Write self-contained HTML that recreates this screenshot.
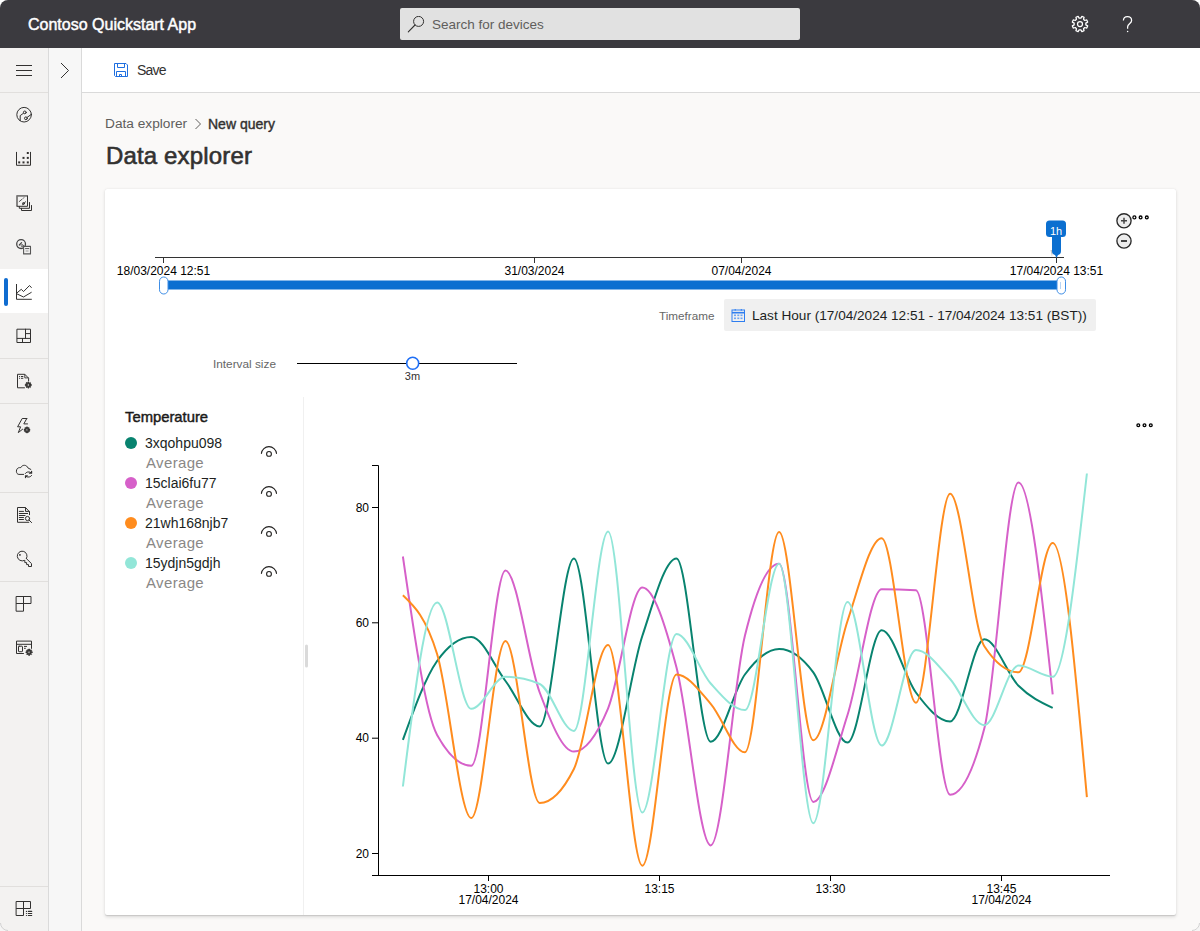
<!DOCTYPE html>
<html><head><meta charset="utf-8">
<style>
*{box-sizing:border-box;margin:0;padding:0}
html,body{width:1200px;height:931px;overflow:hidden;background:#fff;font-family:"Liberation Sans",sans-serif}
.abs{position:absolute}
#app{position:absolute;left:0;top:0;width:1200px;height:931px;border-radius:8px;overflow:hidden;background:#faf9f8}
#top{left:0;top:0;width:1200px;height:48px;background:#3b3a3f}
#title{left:28px;top:16px;color:#fff;font-weight:400;font-size:16px;letter-spacing:0px;-webkit-text-stroke:0.45px #fff;white-space:nowrap}
#search{left:400px;top:8px;width:400px;height:32px;background:#e1e1e1;border-radius:2px}
#search span{position:absolute;left:32px;top:9px;font-size:13.5px;color:#605e5c;white-space:nowrap}
#nav{left:0;top:48px;width:49px;height:883px;background:#f3f2f1;border-right:1px solid #dadada}
#nav2{left:49px;top:48px;width:33px;height:883px;background:#f7f7f7;border-right:1px solid #dadada}
#cmd{left:82px;top:48px;width:1118px;height:45px;background:#fff;border-bottom:1px solid #dadada}
.sep{position:absolute;left:0;width:48px;height:1px;background:#e1dfdd}
.txt{position:absolute;white-space:nowrap}
#card{left:105px;top:189px;width:1071px;height:726px;background:#fff;border-radius:2px;box-shadow:0 1.6px 3.6px rgba(0,0,0,.13),0 0.3px 0.9px rgba(0,0,0,.11)}
.ax{font-family:"Liberation Sans",sans-serif;font-size:12px;fill:#000}
</style></head><body>
<div id="app">
 <div id="top" class="abs">
  <div id="title" class="abs">Contoso Quickstart App</div>
  <div id="search" class="abs">
   <svg class="abs" style="left:5px;top:8px" width="20" height="20" viewBox="0 0 20 20"><circle cx="13.6" cy="5.4" r="5" fill="none" stroke="#323130" stroke-width="1"/><line x1="10" y1="9" x2="3.3" y2="15.8" stroke="#323130" stroke-width="1.1" stroke-linecap="round"/></svg>
   <span>Search for devices</span>
  </div>
  <svg class="abs" style="left:1070px;top:14px" width="20" height="20" viewBox="0 0 20 20"><g fill="none" stroke="#fff" stroke-width="1.25" stroke-linejoin="round"><polygon points="15.83,10.88 17.67,11.90 16.77,14.07 14.75,13.51 13.51,14.75 14.07,16.77 11.90,17.67 10.88,15.83 9.12,15.83 8.10,17.67 5.93,16.77 6.49,14.75 5.25,13.51 3.23,14.07 2.33,11.90 4.17,10.88 4.17,9.12 2.33,8.10 3.23,5.93 5.25,6.49 6.49,5.25 5.93,3.23 8.10,2.33 9.12,4.17 10.88,4.17 11.90,2.33 14.07,3.23 13.51,5.25 14.75,6.49 16.77,5.93 17.67,8.10 15.83,9.12"/><circle cx="10" cy="10" r="2.5"/></g></svg>
  <svg class="abs" style="left:1117px;top:12px" width="20" height="24" viewBox="1117 12 20 24"><path d="M1123.4,20.6C1123.4,18.1 1125.2,16.5 1127.5,16.5C1129.8,16.5 1131.6,18.1 1131.6,20.4C1131.6,23.4 1127.6,24.2 1127.6,26.9V28.8" fill="none" stroke="#fff" stroke-width="1.25"/><circle cx="1127.6" cy="31.4" r="0.75" fill="#fff"/></svg>
 </div>

 <div id="nav" class="abs">
  <!-- hamburger -->
  <svg class="abs" style="left:16px;top:16px" width="16" height="12" viewBox="0 0 16 12"><g stroke="#323130" stroke-width="1"><line x1="0" y1="1.5" x2="16" y2="1.5"/><line x1="0" y1="6.5" x2="16" y2="6.5"/><line x1="0" y1="11.5" x2="16" y2="11.5"/></g></svg>
  <div class="sep" style="top:44px"></div>
  <div class="abs" style="left:0;top:221px;width:48px;height:44px;background:#fff"></div><div class="abs" style="left:4px;top:230px;width:4px;height:28px;border-radius:2px;background:#0f6cd0"></div><svg class="abs" style="left:16px;top:236px" width="16" height="16" viewBox="0 0 16 16"><g fill="none" stroke="#323130" stroke-width="1" stroke-linejoin="round"><path d="M0.5,0V15.3H15.8"/><path d="M0.8,9L5.3,5.3L7.5,7.6L13.5,1.5L15.6,3.8"/><path d="M0.8,9.8L7.5,13L15.6,8.2"/></g></svg><div class="sep" style="top:310px"></div><div class="sep" style="top:355px"></div><div class="sep" style="top:444px"></div><div class="sep" style="top:533px"></div><div class="sep" style="top:838px"></div><svg class="abs" style="left:14px;top:56px" width="20" height="20" viewBox="0 0 20 20"><g fill="none" stroke="#323130" stroke-width="1" stroke-linecap="round" stroke-linejoin="round"><circle cx="10.1" cy="10.7" r="7.3"/><path d="M6.2,16.6V11.6L9.4,9.3"/><circle cx="10.8" cy="8.4" r="1.4"/><circle cx="11.9" cy="14.3" r="1.4"/><path d="M13.1,13.4L17.3,10.4"/></g></svg>
<svg class="abs" style="left:14px;top:100px" width="20" height="20" viewBox="0 0 20 20"><g fill="none" stroke="#323130" stroke-width="1" stroke-linecap="round" stroke-linejoin="round"><path d="M2.5,4.3V17.3H16.5V4.3"/><rect x="4.2" y="13.4" width="2" height="2" fill="#323130" stroke="none"/><rect x="8.5" y="13.4" width="2" height="2" fill="#323130" stroke="none"/><rect x="12.8" y="13.4" width="2" height="2" fill="#323130" stroke="none"/><rect x="8.5" y="8.9" width="2" height="2" fill="#323130" stroke="none"/><rect x="12.8" y="8.9" width="2" height="2" fill="#323130" stroke="none"/><rect x="12.8" y="4.0" width="2" height="2" fill="#323130" stroke="none"/></g></svg>
<svg class="abs" style="left:14px;top:145px" width="20" height="20" viewBox="0 0 20 20"><g fill="none" stroke="#323130" stroke-width="1" stroke-linecap="round" stroke-linejoin="round"><path d="M3,13.2V2.9H13.3" stroke="#7a7978" stroke-width="1.8" stroke-linecap="butt"/><path d="M13.5,2.8V13.3H3" /><path d="M5.2,8.6L7.8,6.4" stroke="#555"/><path d="M8.8,5.6L10.2,4.5" stroke="#777"/><path d="M8.6,11.6L11.6,8.8"/><circle cx="9.5" cy="10.5" r="1" /><path d="M5.3,13.5V15.3H15.5V9.5"/><path d="M7.5,15.3V17.5H17.5V12.5"/></g></svg>
<svg class="abs" style="left:14px;top:189px" width="20" height="20" viewBox="0 0 20 20"><g fill="none" stroke="#323130" stroke-width="1" stroke-linecap="round" stroke-linejoin="round"><circle cx="7.1" cy="7.1" r="4.4" stroke="#444" stroke-width="1.3"/><path d="M5.3,8L7.6,5.6" stroke="#444" stroke-width="1.2"/><circle cx="8.2" cy="8.6" r="1.1" stroke="#666"/><rect x="9.6" y="9.4" width="6.9" height="7.5" fill="#f3f2f1" stroke="#555" stroke-width="1.1"/><path d="M11.5,11.6H14.8" stroke="#555"/><path d="M12,14H14.2" stroke="#999"/></g></svg>
<svg class="abs" style="left:14px;top:278px" width="20" height="20" viewBox="0 0 20 20"><g fill="none" stroke="#323130" stroke-width="1" stroke-linecap="round" stroke-linejoin="round"><rect x="3.3" y="3.2" width="13.2" height="13.3"/><path d="M11.5,3.2V12.4M3.3,12.4H16.5M11.5,7.6H16.5M8.5,12.4V16.5"/></g></svg>
<svg class="abs" style="left:14px;top:323px" width="20" height="20" viewBox="0 0 20 20"><g fill="none" stroke="#323130" stroke-width="1" stroke-linecap="round" stroke-linejoin="round"><path d="M10.5,16.8H3.5V3.3H10.8L14.6,7.2V9.7"/><path d="M10.8,3.6V6.9H14.3" stroke-width="0.9"/><path d="M5.5,5.5H5.6M5.5,7.3H5.6M7.3,5.5H8.9M7.3,7.3H8.9"/><polygon points="16.36,13.55 17.38,13.64 17.38,14.36 16.36,14.45 16.08,15.14 16.73,15.92 16.22,16.43 15.44,15.78 14.75,16.06 14.66,17.08 13.94,17.08 13.85,16.06 13.16,15.78 12.38,16.43 11.87,15.92 12.52,15.14 12.24,14.45 11.22,14.36 11.22,13.64 12.24,13.55 12.52,12.86 11.87,12.08 12.38,11.57 13.16,12.22 13.85,11.94 13.94,10.92 14.66,10.92 14.75,11.94 15.44,12.22 16.22,11.57 16.73,12.08 16.08,12.86" fill="#323130"/><circle cx="14.3" cy="14.0" r="1.2400000000000002" fill="#f3f2f1"/></g></svg>
<svg class="abs" style="left:14px;top:368px" width="20" height="20" viewBox="0 0 20 20"><g fill="none" stroke="#323130" stroke-width="1" stroke-linecap="round" stroke-linejoin="round"><path d="M12.8,2.5H8.2L3.6,10.8H6.6L4.3,16.6L8.6,13.2"/><path d="M12.8,2.5L9.8,7.9H13.5"/><polygon points="14.99,13.46 15.98,13.55 15.98,14.25 14.99,14.34 14.72,15.00 15.36,15.76 14.86,16.26 14.10,15.62 13.44,15.89 13.35,16.88 12.65,16.88 12.56,15.89 11.90,15.62 11.14,16.26 10.64,15.76 11.28,15.00 11.01,14.34 10.02,14.25 10.02,13.55 11.01,13.46 11.28,12.80 10.64,12.04 11.14,11.54 11.90,12.18 12.56,11.91 12.65,10.92 13.35,10.92 13.44,11.91 14.10,12.18 14.86,11.54 15.36,12.04 14.72,12.80" fill="#323130"/><circle cx="13.0" cy="13.9" r="1.2000000000000002" fill="#f3f2f1"/></g></svg>
<svg class="abs" style="left:14px;top:413px" width="20" height="20" viewBox="0 0 20 20"><g fill="none" stroke="#323130" stroke-width="1" stroke-linecap="round" stroke-linejoin="round"><path d="M9.6,13.4H4.9C3.3,13.4 2.4,11.9 2.4,10.2C2.4,8.3 3.6,6.6 5.6,6.6H6.8C7.5,5.1 8.8,4.3 10.4,4.3C12.1,4.3 13.4,5.5 14.1,7.1L16.8,8.4"/><path d="M11.3,12.5C12.2,10.9 14.8,10.2 17.1,11.6"/><path d="M15.5,12.2H17.6V10.4" stroke-width="1.2"/><path d="M17.6,14.5C16.7,16.1 14.1,16.8 11.8,15.4"/><path d="M13.4,14.8H11.5V16.6" stroke-width="1.2"/></g></svg>
<svg class="abs" style="left:14px;top:457px" width="20" height="20" viewBox="0 0 20 20"><g fill="none" stroke="#323130" stroke-width="1" stroke-linecap="round" stroke-linejoin="round"><path d="M14.8,17.3H3.5V2.5H11.5L15.5,6.8V9.7"/><path d="M11.5,2.8V6.4H15.3"/><path d="M5.3,6.4H9.5M5.3,8.5H13.6M5.3,10.5H11M5.3,12.5H9.5M5.3,14.5H9.5"/><circle cx="13.5" cy="13.5" r="2.1"/><path d="M15.1,15.1L17.6,17.6"/></g></svg>
<svg class="abs" style="left:14px;top:502px" width="20" height="20" viewBox="0 0 20 20"><g fill="none" stroke="#323130" stroke-width="1" stroke-linecap="round" stroke-linejoin="round"><path d="M12.4,8.6A4.9,4.9 0 1 0 10.3,10.5"/><rect x="5.1" y="4.1" width="1.6" height="1.6" fill="#323130" stroke="none"/><path d="M12.4,8.6L17.5,13.6V16.5H14.5V14.6H12.6V12.6H10.8V10.5"/></g></svg>
<svg class="abs" style="left:14px;top:546px" width="20" height="20" viewBox="0 0 20 20"><g fill="none" stroke="#323130" stroke-width="1" stroke-linecap="round" stroke-linejoin="round"><path d="M2.5,2.5H17V9.5H9.5V17.2H2.5Z"/><path d="M9.5,2.5V9.5M2.5,9.5H9.5"/></g></svg>
<svg class="abs" style="left:14px;top:589px" width="20" height="20" viewBox="0 0 20 20"><g fill="none" stroke="#323130" stroke-width="1" stroke-linecap="round" stroke-linejoin="round"><path d="M9.5,16.5H2.5V4.1H17.5V11.4"/><path d="M2.5,7.3H17.5"/><rect x="4.5" y="9.2" width="4" height="5.5" rx="0.6"/><path d="M10.4,9.4H12.6M10.4,11.3H11.4"/><polygon points="17.23,14.73 18.28,14.82 18.28,15.58 17.23,15.67 16.93,16.37 17.61,17.18 17.08,17.71 16.27,17.03 15.57,17.33 15.48,18.38 14.72,18.38 14.63,17.33 13.93,17.03 13.12,17.71 12.59,17.18 13.27,16.37 12.97,15.67 11.92,15.58 11.92,14.82 12.97,14.73 13.27,14.03 12.59,13.22 13.12,12.69 13.93,13.37 14.63,13.07 14.72,12.02 15.48,12.02 15.57,13.07 16.27,13.37 17.08,12.69 17.61,13.22 16.93,14.03" fill="#323130"/><circle cx="15.1" cy="15.2" r="1.2800000000000002" fill="#f3f2f1"/></g></svg>
<svg class="abs" style="left:14px;top:851px" width="20" height="20" viewBox="0 0 20 20"><g fill="none" stroke="#323130" stroke-width="1" stroke-linecap="round" stroke-linejoin="round"><path d="M2.5,2.5H16.5V9.5H9.5V16.5H2.5Z"/><path d="M9.5,2.5V9.5M2.5,9.5H9.5"/><path d="M12.4,12.4H12.5M12.4,14.5H12.5M12.4,16.5H12.5M14.3,12.4H17.7M14.3,14.5H17.7M14.3,16.5H17.7" stroke-width="1.1"/></g></svg>
 </div>
 <div id="nav2" class="abs">
  <svg class="abs" style="left:11px;top:14px" width="10" height="17" viewBox="0 0 10 17"><polyline points="1,1 8.5,8.5 1,16" fill="none" stroke="#323130" stroke-width="1"/></svg>
 </div>
 <div id="cmd" class="abs">
  <svg class="abs" style="left:32px;top:15px" width="14" height="14" viewBox="0 0 14 14"><g fill="none" stroke="#1f6fe0" stroke-width="1"><path d="M0.5,0.5H12L13.5,2V13.5H1.5L0.5,12.5Z"/><path d="M3.5,0.5V4.5H10.5V0.5"/><path d="M2.5,13.5V8.5H11.5V13.5"/><path d="M5.5,13.5V11.5H7.5V13.5"/></g></svg>
  <div class="txt" style="left:55px;top:14px;font-size:14px;color:#323130;letter-spacing:-0.8px">Save</div>
 </div>

 <div class="txt" style="left:105px;top:116px;font-size:13.7px;color:#605e5c">Data explorer</div>
 <svg class="abs" style="left:194px;top:118px" width="9" height="12" viewBox="0 0 9 12"><polyline points="1.5,1 6.5,6 1.5,11" fill="none" stroke="#605e5c" stroke-width="1"/></svg>
 <div class="txt" style="left:208px;top:116px;font-size:14px;font-weight:400;color:#323130;-webkit-text-stroke:0.4px #323130">New query</div>
 <div class="txt" style="left:106px;top:142px;font-size:24px;font-weight:400;color:#323130;-webkit-text-stroke:0.6px #323130;letter-spacing:0.15px">Data explorer</div>

 <div id="card" class="abs"></div>


 <!-- timeframe -->
 <div class="txt" style="left:659px;top:309px;font-size:11.7px;color:#666">Timeframe</div>
 <div class="abs" style="left:724px;top:299px;width:372px;height:32px;background:#f0f0f0;border-radius:2px"></div>
 <svg class="abs" style="left:731px;top:309px" width="15" height="13" viewBox="0 0.5 15 13"><g fill="none" stroke="#2f7ef0" stroke-width="1"><rect x="1" y="1.5" width="12.5" height="11.5"/><path d="M1,4.2H13.5" stroke-width="1.6"/><path d="M4.2,0.5V2.2M10.3,0.5V2.2" /></g><g fill="#6ea5f5"><rect x="3" y="6" width="2" height="1.6"/><rect x="6.3" y="6" width="2" height="1.6"/><rect x="9.5" y="6" width="2" height="1.6"/><rect x="3" y="9" width="2" height="1.6"/><rect x="6.3" y="9" width="2" height="1.6"/><rect x="9.5" y="9" width="2" height="1.6"/></g></svg>
 <div class="txt" style="left:752px;top:308px;font-size:13.6px;color:#201f1e">Last Hour (17/04/2024 12:51 - 17/04/2024 13:51 (BST))</div>
 <!-- interval -->
 <div class="txt" style="left:213px;top:357px;font-size:11.8px;color:#666">Interval size</div>
 <!-- legend -->
 <div class="txt" style="left:125px;top:409px;font-size:14.8px;font-weight:400;color:#1b1a19;-webkit-text-stroke:0.45px #1b1a19">Temperature</div>
 <div class="abs" style="left:125px;top:437px;width:12px;height:12px;border-radius:6px;background:#08836f"></div>
<div class="txt" style="left:145px;top:435px;font-size:14px;color:#201f1e">3xqohpu098</div>
<div class="txt" style="left:146px;top:454px;font-size:15px;letter-spacing:0.35px;color:#8a8886">Average</div>
<svg class="abs" style="left:259px;top:444px" width="20" height="14" viewBox="0 0 20 14"><g fill="none" stroke="#201f1e" stroke-width="1.1" stroke-linecap="round"><path d="M2.4,9.4A7.6,7.6 0 0 1 17.5,9.4"/><circle cx="10" cy="9.9" r="2.4"/></g></svg>
<div class="abs" style="left:125px;top:477px;width:12px;height:12px;border-radius:6px;background:#d660c9"></div>
<div class="txt" style="left:145px;top:475px;font-size:14px;color:#201f1e">15clai6fu77</div>
<div class="txt" style="left:146px;top:494px;font-size:15px;letter-spacing:0.35px;color:#8a8886">Average</div>
<svg class="abs" style="left:259px;top:484px" width="20" height="14" viewBox="0 0 20 14"><g fill="none" stroke="#201f1e" stroke-width="1.1" stroke-linecap="round"><path d="M2.4,9.4A7.6,7.6 0 0 1 17.5,9.4"/><circle cx="10" cy="9.9" r="2.4"/></g></svg>
<div class="abs" style="left:125px;top:517px;width:12px;height:12px;border-radius:6px;background:#ff8c1e"></div>
<div class="txt" style="left:145px;top:515px;font-size:14px;color:#201f1e">21wh168njb7</div>
<div class="txt" style="left:146px;top:534px;font-size:15px;letter-spacing:0.35px;color:#8a8886">Average</div>
<svg class="abs" style="left:259px;top:524px" width="20" height="14" viewBox="0 0 20 14"><g fill="none" stroke="#201f1e" stroke-width="1.1" stroke-linecap="round"><path d="M2.4,9.4A7.6,7.6 0 0 1 17.5,9.4"/><circle cx="10" cy="9.9" r="2.4"/></g></svg>
<div class="abs" style="left:125px;top:557px;width:12px;height:12px;border-radius:6px;background:#92e6d8"></div>
<div class="txt" style="left:145px;top:555px;font-size:14px;color:#201f1e">15ydjn5gdjh</div>
<div class="txt" style="left:146px;top:574px;font-size:15px;letter-spacing:0.35px;color:#8a8886">Average</div>
<svg class="abs" style="left:259px;top:564px" width="20" height="14" viewBox="0 0 20 14"><g fill="none" stroke="#201f1e" stroke-width="1.1" stroke-linecap="round"><path d="M2.4,9.4A7.6,7.6 0 0 1 17.5,9.4"/><circle cx="10" cy="9.9" r="2.4"/></g></svg>
 <svg class="abs" style="left:0;top:0" width="1200" height="931" viewBox="0 0 1200 931">
  <!-- timeline -->
  <line x1="155" y1="257.5" x2="1064" y2="257.5" stroke="#333" stroke-width="1"/>
  <line x1="163.5" y1="257.5" x2="163.5" y2="263" stroke="#333"/>
<text class="ax" x="163.5" y="275" text-anchor="middle">18/03/2024 12:51</text>
<line x1="534.5" y1="257.5" x2="534.5" y2="263" stroke="#333"/>
<text class="ax" x="534.5" y="275" text-anchor="middle">31/03/2024</text>
<line x1="741.5" y1="257.5" x2="741.5" y2="263" stroke="#333"/>
<text class="ax" x="741.5" y="275" text-anchor="middle">07/04/2024</text>
<line x1="1056.5" y1="257.5" x2="1056.5" y2="263" stroke="#333"/>
<text class="ax" x="1056.5" y="275" text-anchor="middle">17/04/2024 13:51</text>

  <!-- range bar -->
  <rect x="163.5" y="280.5" width="895" height="9" fill="#0b6fd0"/>
  <rect x="159.5" y="277" width="8.5" height="17" rx="4.25" fill="#fff" stroke="#3d8de6" stroke-width="1"/>
  <rect x="1057" y="277" width="8.5" height="17" rx="4.25" fill="#fff" stroke="#3d8de6" stroke-width="1"/>
  <line x1="1060.5" y1="282" x2="1060.5" y2="289" stroke="#b8d4f4" stroke-width="1"/>
  <!-- badge -->
  <path d="M1050.5,250 L1052,257 L1053,250Z" fill="#c8c8c8"/>
  <rect x="1052" y="232" width="9" height="23" rx="4" fill="#0b6fd0"/>
  <path d="M1054.5,254 L1056.5,258 L1058.5,254Z" fill="#0b6fd0"/>
  <rect x="1046" y="220.4" width="20" height="16.6" rx="3.5" fill="#0b6fd0"/>
  <text x="1056" y="235" text-anchor="middle" font-family="Liberation Sans" font-size="11" fill="#fff">1h</text>
  <!-- zoom buttons -->
  <circle cx="1124" cy="220.8" r="7.1" fill="#ececec" stroke="#2a2a2a" stroke-width="1.35"/>
  <path d="M1121,220.8H1127M1124,217.8V223.8" stroke="#444" stroke-width="1.5"/>
  <circle cx="1124" cy="241" r="7.1" fill="#ececec" stroke="#2a2a2a" stroke-width="1.35"/>
  <path d="M1121,241H1127" stroke="#444" stroke-width="2"/>
  <g fill="#fff" stroke="#000" stroke-width="1.3">
   <circle cx="1134.4" cy="217.4" r="1.5"/><circle cx="1140.6" cy="217.4" r="1.4"/><circle cx="1146.8" cy="217.4" r="1.4"/>
   <circle cx="1138.3" cy="425.3" r="1.4"/><circle cx="1144.5" cy="425.3" r="1.4"/><circle cx="1150.8" cy="425.3" r="1.4"/>
  </g>
  <!-- interval slider -->
  <line x1="297" y1="363.5" x2="517" y2="363.5" stroke="#000" stroke-width="1"/>
  <circle cx="412.7" cy="363.3" r="6" fill="#fff" stroke="#1f6ff5" stroke-width="1.6"/>
  <text x="412.5" y="380" text-anchor="middle" font-family="Liberation Sans" font-size="11" fill="#323130">3m</text>
  <!-- legend divider + splitter -->
  <line x1="303.5" y1="397" x2="303.5" y2="915" stroke="#f0f0f0" stroke-width="1"/>
  <rect x="305" y="644.5" width="3" height="23" rx="1.5" fill="#dadada"/>
  <!-- chart axes -->
  <g stroke="#000" stroke-width="1" fill="none">
   <path d="M372,465.5H378.5V875.5H372"/>
   <path d="M372,875.5H1110"/>
  </g>
  <line x1="372" y1="853.5" x2="378.5" y2="853.5" stroke="#000"/>
<text class="ax" x="369" y="857.7" text-anchor="end">20</text>
<line x1="372" y1="738.2" x2="378.5" y2="738.2" stroke="#000"/>
<text class="ax" x="369" y="742.4" text-anchor="end">40</text>
<line x1="372" y1="622.8" x2="378.5" y2="622.8" stroke="#000"/>
<text class="ax" x="369" y="627.0" text-anchor="end">60</text>
<line x1="372" y1="507.5" x2="378.5" y2="507.5" stroke="#000"/>
<text class="ax" x="369" y="511.7" text-anchor="end">80</text>
<line x1="488.5" y1="875.5" x2="488.5" y2="881" stroke="#000"/>
<text class="ax" x="488.5" y="892.5" text-anchor="middle">13:00</text>
<text class="ax" x="488.5" y="904" text-anchor="middle">17/04/2024</text>
<line x1="659.5" y1="875.5" x2="659.5" y2="881" stroke="#000"/>
<text class="ax" x="659.5" y="892.5" text-anchor="middle">13:15</text>
<line x1="830.5" y1="875.5" x2="830.5" y2="881" stroke="#000"/>
<text class="ax" x="830.5" y="892.5" text-anchor="middle">13:30</text>
<line x1="1001.5" y1="875.5" x2="1001.5" y2="881" stroke="#000"/>
<text class="ax" x="1001.5" y="892.5" text-anchor="middle">13:45</text>
<text class="ax" x="1001.5" y="904" text-anchor="middle">17/04/2024</text>
  <g fill="none" stroke-width="2">
   <path d="M402.90,739.90C414.30,708.45,425.70,677.00,437.10,661.00C448.50,645.00,459.90,637.00,471.30,637.00C482.70,637.00,494.10,666.10,505.50,681.00C516.90,695.90,528.30,726.40,539.70,726.40C551.10,726.40,562.50,558.50,573.90,558.50C585.30,558.50,596.70,763.60,608.10,763.60C619.50,763.60,630.90,670.18,642.30,636.00C653.70,601.82,665.10,558.50,676.50,558.50C687.90,558.50,699.30,741.70,710.70,741.70C722.10,741.70,733.50,689.97,744.90,674.50C756.30,659.03,767.70,648.90,779.10,648.90C790.50,648.90,801.90,656.70,813.30,672.30C824.70,687.90,836.10,742.60,847.50,742.60C858.90,742.60,870.30,630.20,881.70,630.20C893.10,630.20,904.50,677.30,915.90,692.50C927.30,707.70,938.70,721.40,950.10,721.40C961.50,721.40,972.90,639.20,984.30,639.20C995.70,639.20,1007.10,674.35,1018.50,685.80C1029.90,697.25,1041.30,702.57,1052.70,707.90" stroke="#08836f"/>
   <path d="M402.90,556.50C414.30,635.48,425.70,714.47,437.10,735.00C448.50,755.53,459.90,765.80,471.30,765.80C482.70,765.80,494.10,570.50,505.50,570.50C516.90,570.50,528.30,662.32,539.70,692.50C551.10,722.68,562.50,751.60,573.90,751.60C585.30,751.60,596.70,735.67,608.10,708.30C619.50,680.93,630.90,587.40,642.30,587.40C653.70,587.40,665.10,624.40,676.50,667.40C687.90,710.40,699.30,845.40,710.70,845.40C722.10,845.40,733.50,682.75,744.90,635.80C756.30,588.85,767.70,563.70,779.10,563.70C790.50,563.70,801.90,801.90,813.30,801.90C824.70,801.90,836.10,750.45,847.50,715.00C858.90,679.55,870.30,589.20,881.70,589.20C893.10,589.20,904.50,589.57,915.90,590.30C927.30,591.03,938.70,794.70,950.10,794.70C961.50,794.70,972.90,772.67,984.30,728.60C995.70,684.53,1007.10,482.50,1018.50,482.50C1029.90,482.50,1041.30,588.40,1052.70,694.30" stroke="#d660c9"/>
   <path d="M402.90,595.30C414.30,606.08,425.70,616.87,437.10,654.00C448.50,691.13,459.90,818.10,471.30,818.10C482.70,818.10,494.10,641.00,505.50,641.00C516.90,641.00,528.30,803.00,539.70,803.00C551.10,803.00,562.50,791.67,573.90,769.00C585.30,746.33,596.70,644.90,608.10,644.90C619.50,644.90,630.90,865.70,642.30,865.70C653.70,865.70,665.10,674.50,676.50,674.50C687.90,674.50,699.30,690.83,710.70,703.80C722.10,716.77,733.50,752.30,744.90,752.30C756.30,752.30,767.70,532.10,779.10,532.10C790.50,532.10,801.90,740.30,813.30,740.30C824.70,740.30,836.10,654.68,847.50,621.00C858.90,587.32,870.30,538.20,881.70,538.20C893.10,538.20,904.50,702.70,915.90,702.70C927.30,702.70,938.70,493.80,950.10,493.80C961.50,493.80,972.90,628.80,984.30,646.20C995.70,663.60,1007.10,672.30,1018.50,672.30C1029.90,672.30,1041.30,543.00,1052.70,543.00C1064.10,543.00,1075.50,670.10,1086.90,797.20" stroke="#ff8c1e"/>
   <path d="M402.90,786.50C414.30,694.50,425.70,602.50,437.10,602.50C448.50,602.50,459.90,708.80,471.30,708.80C482.70,708.80,494.10,676.80,505.50,676.80C516.90,676.80,528.30,679.20,539.70,684.00C551.10,688.80,562.50,730.90,573.90,730.90C585.30,730.90,596.70,531.50,608.10,531.50C619.50,531.50,630.90,812.50,642.30,812.50C653.70,812.50,665.10,634.00,676.50,634.00C687.90,634.00,699.30,670.82,710.70,683.50C722.10,696.18,733.50,710.10,744.90,710.10C756.30,710.10,767.70,563.70,779.10,563.70C790.50,563.70,801.90,823.30,813.30,823.30C824.70,823.30,836.10,602.00,847.50,602.00C858.90,602.00,870.30,745.50,881.70,745.50C893.10,745.50,904.50,650.00,915.90,650.00C927.30,650.00,938.70,666.47,950.10,679.00C961.50,691.53,972.90,725.20,984.30,725.20C995.70,725.20,1007.10,665.60,1018.50,665.60C1029.90,665.60,1041.30,676.80,1052.70,676.80C1064.10,676.80,1075.50,575.15,1086.90,473.50" stroke="#92e6d8"/>
  </g>
 </svg>
</div>
 <svg class="abs" style="left:0;top:0;z-index:5" width="1200" height="931" viewBox="0 0 1200 931">
  <path d="M0,923A8,8 0 0 0 8,931H0Z" fill="#f5f5f5"/>
  <path d="M0.5,923A7.5,7.5 0 0 0 8,930.5" fill="none" stroke="#d2d2d2" stroke-width="1"/>
  <path d="M1200,923A8,8 0 0 1 1192,931H1200Z" fill="#f5f5f5"/>
  <path d="M1199.5,923A7.5,7.5 0 0 1 1192,930.5" fill="none" stroke="#d2d2d2" stroke-width="1"/>
 </svg>
</body></html>
